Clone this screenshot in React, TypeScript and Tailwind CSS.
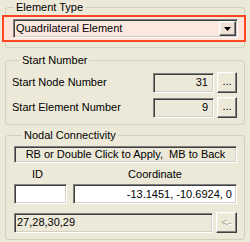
import React from "react";

// Classic Win32 3D edges
const sunken =
  "border border-t-[#808080] border-l-[#808080] border-b-white border-r-white shadow-[inset_1px_1px_0_#404040,inset_-1px_-1px_0_#D4D0C8]";
const raised =
  "border border-t-white border-l-white border-b-[#404040] border-r-[#404040] shadow-[inset_-1px_-1px_0_#808080,inset_1px_1px_0_#F1EFE2]";

function Group({ title, className, children }: { title: string; className?: string; children: React.ReactNode }) {
  return (
    <fieldset className={`rounded-[3px] border border-[#D0D0BF] ${className ?? ""}`}>
      <legend className="ml-[8px] px-[2px] text-[11px] leading-[14px] text-black">{title}</legend>
      {children}
    </fieldset>
  );
}

function DotsButton() {
  return (
    <button
      type="button"
      className={`flex h-[21px] w-[20px] items-center justify-center bg-[#ECE9D8] pb-[3px] text-[11px] leading-none text-black ${raised}`}
    >
      ...
    </button>
  );
}

export default function App() {
  return (
    <div
      className="flex h-[242px] w-[250px] flex-col bg-[#ECE9D8] px-[5px] text-[11px] text-black"
      style={{ fontFamily: '"Liberation Sans", Arial, sans-serif' }}
    >
      {/* Element Type */}
      <Group title="Element Type" className="pb-[5px]">
        <div className="-ml-[4px] -mr-[2px] mt-[1px] border-2 border-[#FF4522] bg-[#FCE4DA] py-[2px] pl-[9px] pr-[6px]">
          <div className={`flex h-[19px] items-center bg-[#FDE8E0] ${sunken}`}>
            <span className="flex-1 pl-[2px] leading-[13px]">Quadrilateral Element</span>
            <div className={`mr-[1px] flex h-[15px] w-[17px] items-center justify-center bg-[#EFE0D4] ${raised}`}>
              <svg width="7" height="4" viewBox="0 0 7 4">
                <path d="M0 0h7L3.5 4z" fill="#000" />
              </svg>
            </div>
          </div>
        </div>
      </Group>

      {/* Start Number */}
      <Group title="Start Number" className="mt-[5px] pb-[6px] pl-[6px] pr-[7px]">
        <div className="mt-[5px] flex flex-col gap-[4px]">
          {[
            ["Start Node Number", "31"],
            ["Start Element Number", "9"],
          ].map(([label, value]) => (
            <div key={label} className="flex h-[21px] items-center">
              <span className="flex-1 leading-[13px]">{label}</span>
              <div className={`flex h-[20px] w-[61px] items-center justify-end pr-[5px] ${sunken}`}>{value}</div>
              <div className="ml-[3px]">
                <DotsButton />
              </div>
            </div>
          ))}
        </div>
      </Group>

      {/* Nodal Connectivity */}
      <Group title="Nodal Connectivity" className="mt-[3px] pb-[6px] pl-[8px] pr-[7px]">
        <div
          className={`mt-[4px] flex h-[17px] items-center justify-center whitespace-pre leading-[13px] ${sunken}`}
        >
          RB or Double Click to Apply,  MB to Back
        </div>
        <div className="mt-[4px] flex h-[14px] items-center leading-[13px]">
          <span className="w-[47px] text-center">ID</span>
          <span className="flex-1 pl-[12px] text-center">Coordinate</span>
        </div>
        <div className="mt-[3px] flex gap-[6px]">
          <div className={`h-[20px] w-[53px] bg-white ${sunken}`} />
          <div className={`flex h-[20px] flex-1 items-center justify-end bg-white pr-[4px] ${sunken}`}>
            -13.1451, -10.6924, 0
          </div>
        </div>
        <div className="mt-[8px] flex items-center gap-[3px]">
          <div className={`flex h-[20px] flex-1 items-center pl-[2px] ${sunken}`}>27,28,30,29</div>
          <button
            type="button"
            className={`flex h-[21px] w-[21px] items-center justify-center bg-[#ECE9D8] text-[11px] leading-none text-[#ACA899] [text-shadow:1px_1px_0_#fff] ${raised}`}
          >
            &lt;-
          </button>
        </div>
      </Group>
    </div>
  );
}
